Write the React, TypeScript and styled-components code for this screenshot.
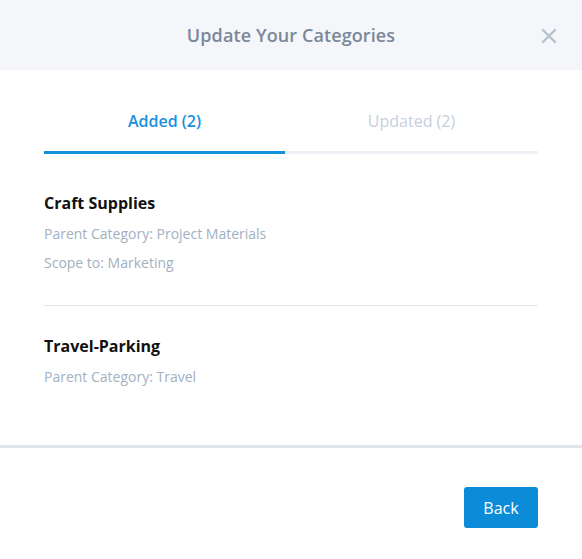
import * as React from "react";
import styled, { createGlobalStyle } from "styled-components";

const GlobalStyle = createGlobalStyle`
  html, body {
    margin: 0;
    padding: 0;
    background: #ffffff;
  }
  body {
    font-family: "Open Sans", "Liberation Sans", sans-serif;
  }
`;

const Modal = styled.div`
  width: 582px;
  height: 559px;
  display: flex;
  flex-direction: column;
  background: #ffffff;
`;

const Header = styled.div`
  position: relative;
  height: 70px;
  background: #f4f6f9;
  display: flex;
  align-items: center;
  justify-content: center;
`;

const Title = styled.h1`
  margin: 0;
  font-size: 18px;
  font-weight: 600;
  color: #7b8799;
  letter-spacing: 0.1px;
`;

const CloseButton = styled.button`
  position: absolute;
  right: 24px;
  top: 27px;
  width: 18px;
  height: 18px;
  padding: 0;
  border: none;
  background: transparent;
  display: flex;
  align-items: center;
  justify-content: center;
  cursor: pointer;
`;

const Body = styled.div`
  flex: 1;
  padding: 0 44px;
`;

const Tabs = styled.div`
  display: flex;
  margin-top: 37px;
`;

const Tab = styled.div<{ active?: boolean }>`
  flex: ${p => (p.active ? "0 0 241px" : "1")};
  text-align: center;
  font-size: 16px;
  line-height: 28px;
  padding-bottom: 16px;
  font-weight: ${p => (p.active ? 600 : 400)};
  color: ${p => (p.active ? "#1a8fdb" : "#c5cfdb")};
  border-bottom: 3px solid ${p => (p.active ? "#1590db" : "#eef2f6")};
`;

const Item = styled.div`
  padding: 38px 0 31px;
  & + & {
    border-top: 1px solid #e1e6ec;
    padding-top: 29px;
  }
`;

const ItemTitle = styled.div`
  font-size: 16px;
  line-height: 22px;
  font-weight: 700;
  color: #111111;
`;

const ItemMeta = styled.div`
  font-size: 14px;
  line-height: 22px;
  color: #a3b0c1;
  margin-top: 9px;
  & + & {
    margin-top: 7px;
  }
`;

const Footer = styled.div`
  border-top: 3px solid #e1e6ed;
  padding: 39px 44px 31px;
  display: flex;
  justify-content: flex-end;
`;

const PrimaryButton = styled.button`
  width: 74px;
  height: 41px;
  border: none;
  border-radius: 3px;
  background: #0b8bd8;
  color: #ffffff;
  font-family: inherit;
  font-size: 16px;
  cursor: pointer;
`;

const categories = [
  {
    name: "Craft Supplies",
    meta: ["Parent Category: Project Materials", "Scope to: Marketing"],
  },
  {
    name: "Travel-Parking",
    meta: ["Parent Category: Travel"],
  },
];

export default function App() {
  return (
    <>
      <GlobalStyle />
      <Modal>
        <Header>
          <Title>Update Your Categories</Title>
          <CloseButton aria-label="Close">
            <svg width="16" height="16" viewBox="0 0 16 16">
              <path
                d="M2 2 L14 14 M14 2 L2 14"
                stroke="#b7c1ce"
                strokeWidth="2.4"
                strokeLinecap="round"
              />
            </svg>
          </CloseButton>
        </Header>
        <Body>
          <Tabs>
            <Tab active>Added (2)</Tab>
            <Tab>Updated (2)</Tab>
          </Tabs>
          {categories.map(c => (
            <Item key={c.name}>
              <ItemTitle>{c.name}</ItemTitle>
              {c.meta.map(m => (
                <ItemMeta key={m}>{m}</ItemMeta>
              ))}
            </Item>
          ))}
        </Body>
        <Footer>
          <PrimaryButton>Back</PrimaryButton>
        </Footer>
      </Modal>
    </>
  );
}
